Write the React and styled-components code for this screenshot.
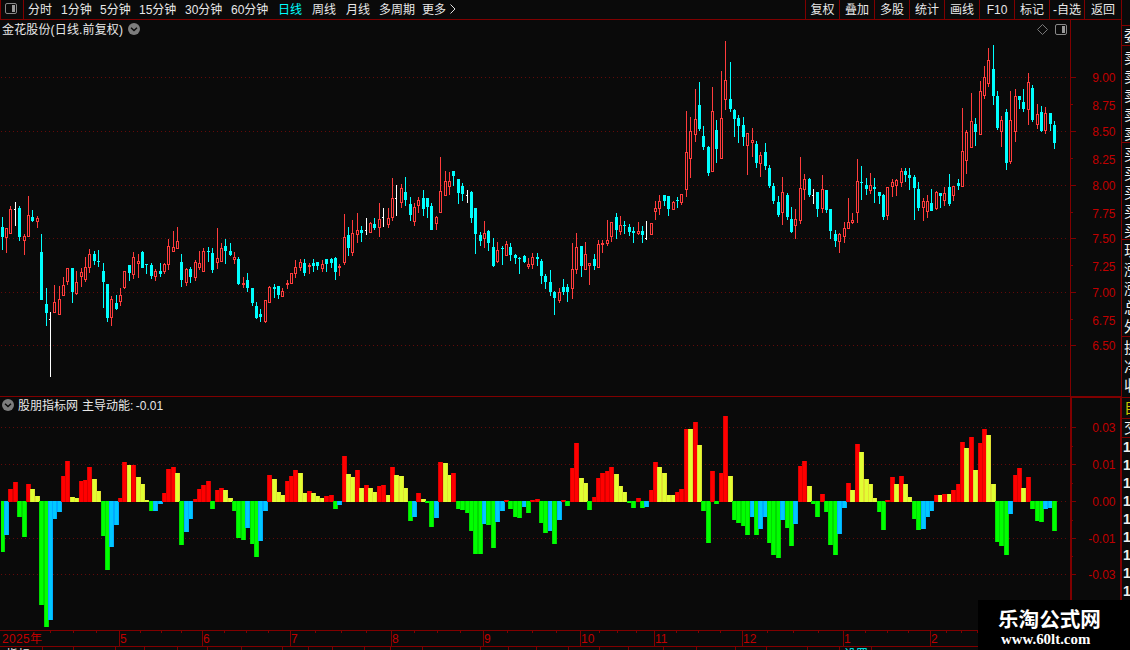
import React from "react";
import styled, { createGlobalStyle } from "styled-components";

const LINE = "#800000";
const LABEL = "#c00000";
const BG = "#0a0a0a";
const UP = "#ff3c3c";
const DOWN = "#00ffff";

const GlobalStyle = createGlobalStyle`
  body { margin: 0; background: ${BG}; overflow: hidden; }
  * { box-sizing: border-box; }
`;

/* kind (r = up, c = down, w = flat), high, body top, body bottom, low */
const CANDLES = `
c217,227,237,250 r228,228,238,253 r206,209,234,234 w202,209,210,226 c206,208,237,241
r234,236,241,255 r196,215,237,237 c210,217,221,222 r216,218,222,228 c234,252,300,300
c288,304,313,326 w312,319,320,377 r285,302,313,313 r286,299,315,315 r277,285,296,296
r268,268,282,285 c268,268,292,303 r271,282,294,295 r268,272,277,287 r257,267,280,282
r249,254,268,273 c251,254,261,265 c250,261,262,267 c263,271,282,308 c284,284,318,322
r296,299,318,326 c295,303,309,310 r288,295,302,306 r271,271,288,289 c265,265,273,281
r252,257,275,279 r254,261,264,278 c251,252,268,268 c264,264,265,274 c263,265,276,279
r269,271,277,281 c263,271,274,277 r263,264,272,274 r239,246,265,270 r231,247,252,252
r227,241,249,249 c254,262,280,287 r268,269,283,286 c267,269,277,283 r260,262,278,281
r251,263,268,270 r248,251,272,272 c247,251,252,262 c248,253,270,273 r228,258,263,269
r243,248,262,262 c239,246,251,264 c243,251,255,256 r252,257,260,264 c257,259,284,285
r277,283,285,288 c273,280,288,292 c288,288,303,306 c302,306,318,319 c309,314,317,322
r300,300,322,323 r286,287,303,303 c284,287,289,298 c286,286,295,299 r288,291,297,297
r280,283,285,289 r273,273,284,284 r260,267,274,278 r259,262,268,271 c259,263,273,276
r263,265,267,274 c259,263,266,272 c262,262,266,270 r260,264,269,272 c259,259,264,272
c258,259,263,268 c257,258,272,280 r264,266,268,276 r214,237,263,265 c227,235,248,256
r220,233,253,256 r213,230,235,243 c226,230,233,242 w218,230,231,235 r222,223,233,233
c218,224,228,230 r203,219,228,237 w208,217,218,227 r208,218,225,228 r178,198,218,221
w185,198,199,216 r184,188,203,208 c177,192,200,206 c197,204,215,221 r203,207,222,226
r197,200,206,213 c190,198,209,216 c198,198,207,218 c203,206,230,230 r216,217,224,230
r157,191,213,213 r171,181,196,196 r172,181,187,195 c171,171,176,186 c179,179,193,204
c183,186,194,201 w190,195,196,203 c191,192,218,223 c208,208,234,254 c232,235,241,246
r221,233,239,248 c230,231,243,251 c238,247,266,267 r242,250,262,263 c246,248,249,265
r241,244,256,256 c243,247,255,261 c254,255,258,264 c257,258,259,274 c255,256,262,263
r258,264,267,269 r253,257,265,269 c253,257,259,266 c259,261,276,284 c274,276,282,289
c270,282,292,296 c291,292,298,315 r288,292,301,303 c279,287,292,295 c284,287,292,302
r243,269,289,299 r233,247,270,274 c246,246,266,277 r242,254,270,270 r263,263,266,285
c254,259,266,270 r240,244,268,268 r240,243,245,253 r220,240,244,246 r222,222,237,242
c213,217,230,239 r216,225,232,235 c221,225,226,234 c224,227,232,236 c227,231,233,243
r222,231,234,235 c226,231,235,243 w221,238,239,240 r223,223,235,235 r201,208,212,220
r195,201,209,215 c195,195,201,206 c196,196,209,216 r201,202,210,210 c197,200,201,208
r194,194,203,205 r111,152,190,197 r117,131,159,178 r89,119,135,142 c82,105,129,131
c126,136,147,150 c146,147,173,176 r87,111,172,172 c120,130,149,163 r71,118,159,159
r41,80,100,110 c62,99,109,112 c109,110,119,137 c115,118,126,143 c117,125,137,146
r133,133,146,175 r128,140,143,157 c141,144,163,168 r152,155,164,177 c143,152,166,170
c165,168,186,188 c183,186,201,204 c196,202,215,217 r177,192,213,225 c193,195,217,220
c207,219,232,233 r209,219,226,239 r157,188,221,224 r174,179,190,200 c178,179,195,197
w189,195,196,204 c192,192,209,217 r175,189,209,213 c190,190,210,213 c209,209,231,239
c230,234,241,247 r233,234,242,253 r222,228,237,243 r198,222,229,229 r213,220,223,224
r159,181,213,223 c166,182,183,200 c178,185,189,195 r173,185,191,194 c178,187,189,203
c192,192,196,204 c194,195,217,220 r187,187,216,220 r179,182,187,197 r179,180,186,196
r168,171,183,187 c168,171,175,182 c168,175,178,190 c175,177,188,220 c182,189,208,211
r198,201,208,221 r195,201,212,218 c189,203,211,211 r191,192,209,210 c193,193,196,208
r187,193,201,206 c174,187,204,206 r186,186,196,201 c179,183,186,190 r108,151,187,187
r130,132,161,174 r93,121,148,148 c118,124,132,146 r81,91,135,135 r66,77,96,99
r48,60,84,87 c45,69,96,105 c91,96,128,130 r116,120,132,147 c109,112,163,170
r91,120,162,164 r89,96,132,142 c96,96,100,109 c89,102,109,112 r73,82,110,125
c85,88,120,122 r104,114,125,129 c106,112,131,132 r107,113,131,134 c113,113,124,131
c121,125,143,149`
  .trim()
  .split(/\s+/)
  .map((t) => [t[0], ...t.slice(1).split(",").map(Number)]);

const MOMENTUM = [
  -51, -34, 13, 20, -16, -36, 18, 13, 6, -104, -126, -119, -18, -11, 26, 41, 5, 4, 21, 22,
  35, 23, 11, -35, -69, -46, -24, 4, 40, 37, 37, 25, 18, 2, -10, -9.9, -3, 9, 33, 35,
  29, -44, -31, -18, 3, 13, 17, 21, -8, 12, 14, 12, 4, -10, -37, -39, -27, -43, -56, -40,
  -10, 27, 23, 10, 7, 21, 26, 32, 29, 9, 11, 9, 6, 4, 6, 7, -8, -4, 46, 28,
  25, 32, 14, 17, 14, 10, 16, 17, 7, 35, 27, 26, 14, -20, -16, 9, 3, -2, -26, -17,
  40, 39, 27, 29, -8, -9, -12, -30, -53, -53, -23, -24, -47, -21, -10, 2, -8, -16, -17, -6,
  -12, 2, 3, -22, -32, -30, -43, -19, 2, -5, 34, 59, 24, 19, -9, 5, 24, 29, 31, 35,
  28, 16, 10, -2, -7, 4, -7, -6, 12, 40, 35, 29, 7, 6.9, 10, 13, 73, 72.9, 80, 57,
  -10, -42, 31, -3, 29, 86, 26, -19, -22, -25, -34, -16, -34, -28, -16, -42, -54, -57, -19, -27,
  -45, -23, 36, 41, 16, -3, -16, 8, -11, -44, -54, -33, -7, 19, 12, 58, 50, 23, 18, 4,
  -11, -29, 2, 25, 18, 26, 18, 5, -18, -29, -28, -16, -10, 7, 6.9, 8, 7.9, 12, 18, 60,
  54, 65, 32, 59, 73, 67, 18, -41, -45, -54, -13, 27, 34, 14, 25, -8, -20, -21, -8, -7,
  -30,
];

const barX = (i) => Math.floor(2.2 + i * 4.385);

const TONES = {
  red: ["#ff0000", "#dc0000"],
  yellow: ["#e1ff32", "#e1e132"],
  green: ["#00ff00", "#00dc00"],
  blue: ["#00c8ff", "#00aaff"],
};

const toneOf = (v, prev) =>
  v > 0 ? (v >= prev ? "red" : "yellow") : v <= prev ? "green" : "blue";

const Page = styled.div`
  width: 1130px;
  height: 650px;
  display: flex;
  position: relative;
  overflow: hidden;
  background: ${BG};
  color: #e8e8e8;
  font: 12px/1 "Liberation Sans", "Noto Sans CJK SC", sans-serif;
`;

const Workspace = styled.main`
  width: 1121px;
  flex: none;
  display: flex;
  flex-direction: column;
`;

const Toolbar = styled.header`
  height: 20px;
  flex: none;
  display: flex;
  border-bottom: 1px solid ${LINE};
  border-left: 1px solid ${LINE};
`;

const LayoutToggle = styled.div`
  width: 23px;
  border-right: 1px solid ${LINE};
  padding: 3px 0 0 4px;
`;

const Periods = styled.nav`
  flex: 1;
  display: flex;
  padding-left: 4px;
`;

const Period = styled.span`
  width: ${(p) => p.$w}px;
  line-height: 20px;
  white-space: nowrap;
  color: ${(p) => (p.$active ? "#00ffff" : "#e8e8e8")};
`;

const ChevronSlot = styled.span`
  padding-top: 4px;
`;

const Actions = styled.div`
  display: flex;
`;

const Action = styled.span`
  width: ${(p) => p.$w || 35}px;
  border-left: 1px solid ${LINE};
  text-align: center;
  line-height: 20px;
  white-space: nowrap;
  height: 19px;
`;

const PaneHead = styled.div`
  height: ${(p) => p.$h}px;
  flex: none;
  display: flex;
`;

const PaneTitle = styled.div`
  flex: 1;
  display: flex;
  align-items: center;
  gap: ${(p) => p.$gap || 5}px;
  padding: 0 3px 0 2px;
  white-space: nowrap;
`;

const Name = styled.span`
  letter-spacing: ${(p) => p.$ls || 0}px;
  line-height: 12px;
  padding-top: 1px;
`;

const PaneTools = styled.div`
  margin-left: auto;
  display: flex;
  gap: 7px;
  align-items: center;
`;

const AxisHead = styled.div`
  width: 51px;
  border-left: ${(p) => (p.$framed ? 2 : 1)}px solid ${LINE};
  border-top: ${(p) => (p.$framed ? 1 : 0)}px solid ${LINE};
  border-right: ${(p) => (p.$framed ? 1 : 0)}px solid ${LINE};
`;

const IndicatorPane = styled.section`
  border-top: 1px solid ${LINE};
  flex: none;
`;

const Plot = styled.svg`
  display: block;
  flex: none;
  overflow: hidden;
  shape-rendering: crispEdges;
`;

const Sidebar = styled.aside`
  width: 9px;
  flex: none;
  border-left: 1px solid ${LINE};
  padding-top: 25px;
  overflow: hidden;
`;

const QuoteGroup = styled.div`
  height: ${(p) => p.$h}px;
  border-top: 1px solid ${LINE};
  padding: ${(p) => p.$pad || 0}px 0 0 ${(p) => (p.$digits ? 1 : 2)}px;
  overflow: hidden;
`;

const QuoteLine = styled.div`
  width: 15px;
  height: ${(p) => p.$h || 19}px;
  line-height: ${(p) => p.$h || 19}px;
  font-size: ${(p) => (p.$bold ? 14 : 15)}px;
  font-weight: ${(p) => (p.$bold ? 700 : 400)};
  color: ${(p) => p.$color || "#f0f0f0"};
`;

const Badge = styled.div`
  position: absolute;
  left: 978px;
  top: 600px;
  width: 152px;
  height: 50px;
  padding: 8px 0 0 20px;
  background: #000;
  color: #fff;
`;

const BadgeName = styled.div`
  font: 700 20.6px/20px "Noto Sans CJK SC", sans-serif;
  white-space: nowrap;
`;

const BadgeUrl = styled.div`
  padding: 0 0 0 3px;
  font: 700 14.9px/22px "Liberation Serif", serif;
`;

const PanelIcon = () => (
  <svg width="12" height="11" viewBox="0 0 12 11">
    <rect x="0.5" y="0.5" width="11" height="10" rx="1.5" fill="none" stroke="#888" />
    <rect x="7" y="2" width="3" height="7" fill="#999" />
  </svg>
);

const DropIcon = () => (
  <svg width="12" height="12" viewBox="0 0 12 12">
    <circle cx="6" cy="6" r="6" fill="#7d7d7d" />
    <path d="M3 4.8 L6 7.6 L9 4.8" fill="none" stroke="#0a0a0a" strokeWidth="1.4" />
  </svg>
);

const Dots = ({ rows }) =>
  rows.map((y) => (
    <line key={y} x1="1" x2="1067" y1={y + 0.5} y2={y + 0.5} stroke="#640a0a" strokeDasharray="1 3" />
  ));

const AxisLabels = ({ items }) =>
  items.map(([text, y]) => (
    <text key={text} x="1115.5" y={y + 4.5} textAnchor="end" fill={LABEL}>
      {text}
    </text>
  ));

const Candle = ({ x, kind, high, top, bottom, low }) => {
  if (kind === "w")
    return (
      <g fill="#fff">
        <rect x={x} y={high} width="1" height={low - high} />
        <rect x={x - 1} y={top} width="1" height="1" />
      </g>
    );
  const color = kind === "r" ? UP : DOWN;
  return (
    <g fill={color}>
      <rect x={x} y={high} width="1" height={low - high} />
      <rect x={x - 1} y={top} width="3" height={bottom - top} />
      {kind === "r" && bottom - top > 2 && (
        <rect x={x} y={top + 1} width="1" height={bottom - top - 2} fill={BG} />
      )}
    </g>
  );
};

const Bar = ({ x, v, tone }) => {
  const h = Math.round(Math.abs(v));
  const y = v > 0 ? 502 - h : 501;
  const [main, edge] = TONES[tone];
  return (
    <>
      <rect x={Math.max(1, x - 2)} y={y} width={x < 3 ? 4 : 5} height={h} fill={edge} />
      <rect x={x - 1} y={y} width="3" height={h} fill={main} />
    </>
  );
};

const PRICE_LABELS = [
  ["9.00", 77.5], ["8.75", 105.5], ["8.50", 131.5], ["8.25", 159.5], ["8.00", 185.5],
  ["7.75", 213.5], ["7.50", 238.5], ["7.25", 266.5], ["7.00", 292.5], ["6.75", 320.5],
  ["6.50", 345.5],
];
const MOMENTUM_LABELS = [
  ["0.03", 427.5], ["0.01", 464.5], ["0.00", 501.5], ["-0.01", 538.5], ["-0.03", 574.5],
];
const PRICE_ROWS = [77, 131, 185, 238, 292, 345];
const PRICE_HALF_ROWS = [104, 158, 212, 265, 319];
const MOMENTUM_ROWS = [427, 464, 501, 538, 574];
const MOMENTUM_HALF_ROWS = [446, 483, 520, 556];
const MONTHS = [
  ["5", 119], ["6", 202], ["7", 290], ["8", 391], ["9", 483], ["10", 580], ["11", 654],
  ["12", 742], ["1", 843], ["2", 930],
];
const WEEKS = [
  50, 73, 96, 140, 161, 181, 224, 246, 268, 315, 341, 366, 414, 437, 460, 507, 532, 556,
  599, 617, 636, 676, 698, 720, 767, 793, 818, 865, 887, 908, 946, 961, 977,
];
const TAB_EDGES = [
  42, 73, 115, 144, 177, 207, 241, 282, 308, 332, 364, 390, 422, 480, 508, 536, 568, 599,
  628, 663, 696, 735, 766, 807, 839, 871,
];
const PERIODS = [
  ["分时", 33], ["1分钟", 39], ["5分钟", 39], ["15分钟", 46], ["30分钟", 46], ["60分钟", 47],
  ["日线", 34], ["周线", 34], ["月线", 33], ["多周期", 43], ["更多", 28],
];
const ACTIONS = ["复权", "叠加", "多股", "统计", "画线", "F10", "标记", "-自选", "返回"];

export default function App() {
  return (
    <Page>
      <GlobalStyle />
      <Workspace>
        <Toolbar>
          <LayoutToggle>
            <PanelIcon />
          </LayoutToggle>
          <Periods>
            {PERIODS.map(([label, w]) => (
              <Period key={label} $w={w} $active={label === "日线"}>
                {label}
              </Period>
            ))}
            <ChevronSlot>
              <svg width="6" height="10" viewBox="0 0 6 10">
                <path d="M0.5 0.5 L5 5 L0.5 9.5" fill="none" stroke="#e0e0e0" />
              </svg>
            </ChevronSlot>
          </Periods>
          <Actions>
            {ACTIONS.map((label, i) => (
              <Action key={label} $w={i === 0 ? 34 : i === 8 ? 37 : 35}>
                {label}
              </Action>
            ))}
          </Actions>
        </Toolbar>

        <PaneHead $h={18}>
          <PaneTitle>
            <Name $ls={0.15}>金花股份(日线.前复权)</Name>
            <DropIcon />
            <PaneTools>
              <svg width="11" height="11" viewBox="0 0 11 11">
                <path d="M5.5 0.5 L10.5 5.5 L5.5 10.5 L0.5 5.5 Z" fill="none" stroke="#777" />
              </svg>
              <PanelIcon />
            </PaneTools>
          </PaneTitle>
          <AxisHead />
        </PaneHead>
        <Plot width="1121" height="358" viewBox="0 38 1121 358">
          <Dots rows={PRICE_ROWS} />
          {CANDLES.map(([kind, high, top, bottom, low], i) => (
            <Candle key={i} x={barX(i)} {...{ kind, high, top, bottom, low }} />
          ))}
          <g fill={LINE}>
            <rect x="1070" y="38" width="1" height="358" />
            {PRICE_ROWS.map((y) => (
              <rect key={y} x="1071" y={y} width="5" height="1" />
            ))}
            {PRICE_HALF_ROWS.map((y) => (
              <rect key={y} x="1071" y={y} width="2" height="1" />
            ))}
          </g>
          <AxisLabels items={PRICE_LABELS} />
        </Plot>

        <IndicatorPane>
          <PaneHead $h={16}>
            <PaneTitle $gap={4}>
              <DropIcon />
              <Name>股朋指标网</Name>
              <Name>主导动能:&thinsp;-0.01</Name>
            </PaneTitle>
            <AxisHead $framed />
          </PaneHead>
          <Plot width="1121" height="217" viewBox="0 413 1121 217">
            <Dots rows={MOMENTUM_ROWS} />
            {MOMENTUM.map((v, i) => (
              <Bar key={i} x={barX(i)} v={v} tone={toneOf(v, i ? MOMENTUM[i - 1] : 0)} />
            ))}
            <g fill={LINE}>
              <rect x="1070" y="413" width="2" height="217" />
              <rect x="1120" y="413" width="1" height="217" />
              {MOMENTUM_ROWS.map((y) => (
                <rect key={y} x="1072" y={y} width="4" height="1" />
              ))}
              {MOMENTUM_HALF_ROWS.map((y) => (
                <rect key={y} x="1072" y={y} width="1" height="1" />
              ))}
            </g>
            <AxisLabels items={MOMENTUM_LABELS} />
          </Plot>
        </IndicatorPane>

        <Plot width="1121" height="20" viewBox="0 630 1121 20">
          <g fill={LINE}>
            <rect x="0" y="630" width="1121" height="1" />
            <rect x="0" y="646" width="1121" height="1" />
            {MONTHS.map(([m, x]) => (
              <rect key={m} x={x} y="631" width="1" height="15" />
            ))}
            {WEEKS.map((x) => (
              <rect key={x} x={x} y="631" width="1" height="2" />
            ))}
            {TAB_EDGES.map((x) => (
              <rect key={x} x={x} y="647" width="1" height="3" />
            ))}
          </g>
          <g fill={LABEL}>
            <text x="2" y="643" textLength="40">2025年</text>
            {MONTHS.map(([m, x]) => (
              <text key={m} x={x + 1} y="643">{m}</text>
            ))}
          </g>
          <text x="6" y="658.5" fill="#e8e8e8">指标</text>
          <text x="844" y="658.5" fill="#00ffff">设置</text>
        </Plot>
      </Workspace>

      <Sidebar>
        <QuoteGroup $h={20}>
          <QuoteLine>委</QuoteLine>
        </QuoteGroup>
        <QuoteGroup $h={97} $pad={2}>
          {[1, 2, 3, 4, 5].map((n) => (
            <QuoteLine key={n}>卖</QuoteLine>
          ))}
        </QuoteGroup>
        <QuoteGroup $h={97} $pad={2}>
          {[1, 2, 3, 4, 5].map((n) => (
            <QuoteLine key={n}>买</QuoteLine>
          ))}
        </QuoteGroup>
        <QuoteGroup $h={97} $pad={1}>
          {["现", "涨", "涨", "总", "外"].map((t, n) => (
            <QuoteLine key={n}>{t}</QuoteLine>
          ))}
        </QuoteGroup>
        <QuoteGroup $h={61} $pad={1}>
          {["换", "净", "收"].map((t) => (
            <QuoteLine key={t}>{t}</QuoteLine>
          ))}
        </QuoteGroup>
        <QuoteGroup $h={21}>
          <QuoteLine $color="#c8c800">自</QuoteLine>
        </QuoteGroup>
        <QuoteGroup $h={19}>
          <QuoteLine $h={18}>交</QuoteLine>
        </QuoteGroup>
        <QuoteGroup $h={213} $digits>
          {[1, 2, 3, 4, 5, 6, 7, 8, 9].map((n) => (
            <QuoteLine key={n} $h={18} $bold>
              1
            </QuoteLine>
          ))}
        </QuoteGroup>
      </Sidebar>

      <Badge>
        <BadgeName>乐淘公式网</BadgeName>
        <BadgeUrl>www.60lt.com</BadgeUrl>
      </Badge>
    </Page>
  );
}
